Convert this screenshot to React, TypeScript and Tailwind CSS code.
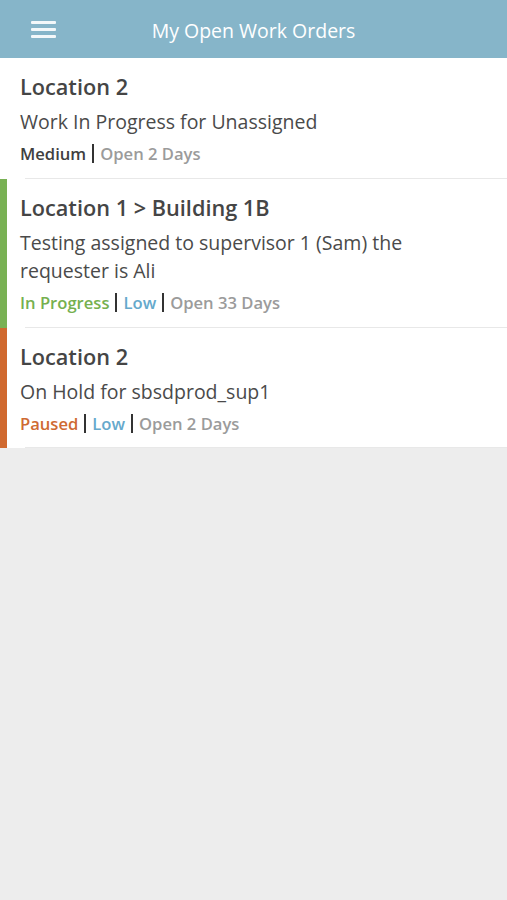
import React from "react";

type Tag = { text: string; color: string };

type Order = {
  location: string;
  desc: string;
  tags: Tag[];
  open: string;
  bar?: string;
};

const orders: Order[] = [
  {
    location: "Location 2",
    desc: "Work In Progress for Unassigned",
    tags: [{ text: "Medium", color: "text-[#404040]" }],
    open: "Open 2 Days",
  },
  {
    location: "Location 1 > Building 1B",
    desc: "Testing assigned to supervisor 1 (Sam) the requester is Ali",
    tags: [
      { text: "In Progress", color: "text-[#76b04f]" },
      { text: "Low", color: "text-[#65a9cc]" },
    ],
    open: "Open 33 Days",
    bar: "bg-[#79b154]",
  },
  {
    location: "Location 2",
    desc: "On Hold for sbsdprod_sup1",
    tags: [
      { text: "Paused", color: "text-[#cf6a32]" },
      { text: "Low", color: "text-[#65a9cc]" },
    ],
    open: "Open 2 Days",
    bar: "bg-[#d0692f]",
  },
];

function Pipe() {
  return <span className="inline-block w-[2px] h-[19px] bg-[#333] align-[-3px] mx-[6px]" />;
}

function OrderRow({ order, last }: { order: Order; last: boolean }) {
  return (
    <div className="flex bg-white">
      <div className={`w-[7px] shrink-0 ${order.bar ?? "bg-white"}`} />
      <div className="flex-1">
        <div className={`pl-[13px] pr-4 pt-[14px] ${last ? "pb-[11px]" : "pb-[12px]"}`}>
          <div className="text-[21.7px] leading-[30px] font-semibold text-[#454545]">
            {order.location}
          </div>
          <div className="mt-[6px] text-[19.5px] leading-[28px] text-[#4a4a4a] max-w-[430px]">
            {order.desc}
          </div>
          <div className="mt-[6px] text-[16.6px] leading-[24px] font-semibold">
            {order.tags.map((t, i) => (
              <span key={i}>
                <span className={t.color}>{t.text}</span>
                <Pipe />
              </span>
            ))}
            <span className="text-[#9b9b9b]">{order.open}</span>
          </div>
        </div>
        <div className="ml-[18px] h-px bg-[#e8e8e8]" />
      </div>
    </div>
  );
}

export default function App() {
  return (
    <div
      className="min-h-[900px] bg-[#ededed]"
      style={{ fontFamily: '"Open Sans", "Noto Sans", sans-serif' }}
    >
      <div className="h-[58px] bg-[#86b5c9] flex items-center relative">
        <button className="absolute left-[31px] top-[21px] flex flex-col gap-[4px]">
          <span className="block w-[25px] h-[3px] bg-white/90 rounded-[1px]" />
          <span className="block w-[25px] h-[3px] bg-white/90 rounded-[1px]" />
          <span className="block w-[25px] h-[3px] bg-white/90 rounded-[1px]" />
        </button>
        <div className="flex-1 text-center text-white text-[19.5px] pt-[4px]">
          My Open Work Orders
        </div>
      </div>
      {orders.map((o, i) => (
        <OrderRow key={i} order={o} last={i === orders.length - 1} />
      ))}
    </div>
  );
}
